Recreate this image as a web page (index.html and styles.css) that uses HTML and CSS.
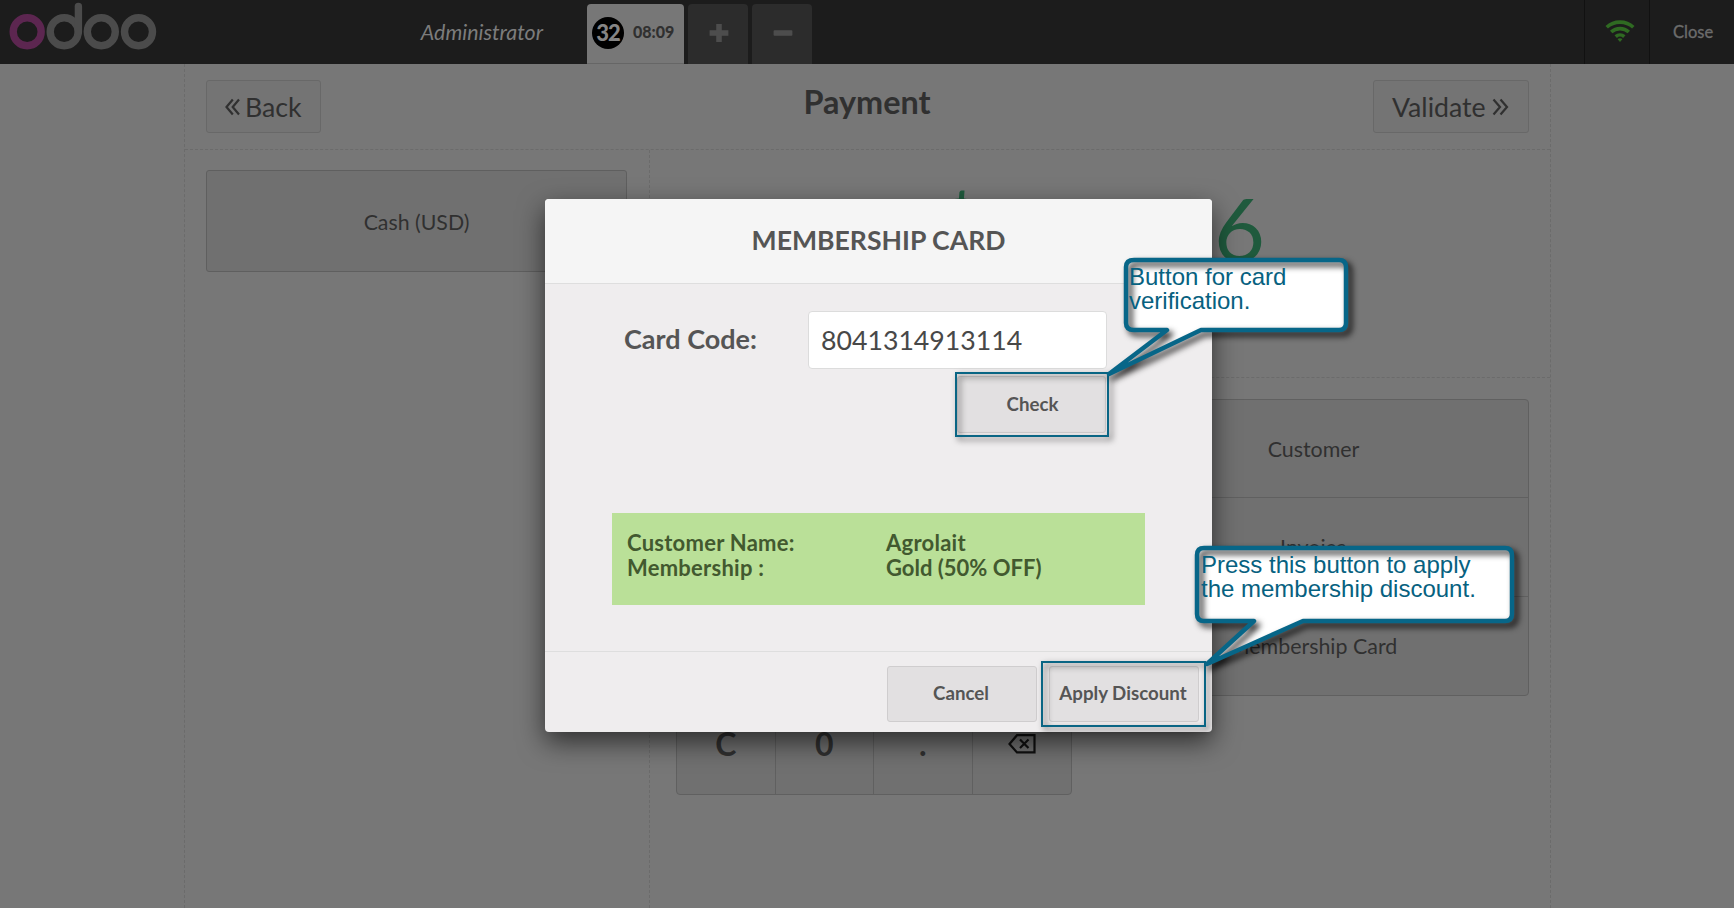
FILE: index.html
```html
<!DOCTYPE html>
<html lang="en">
<head>
<meta charset="utf-8">
<title>Payment</title>
<link rel="stylesheet" href="styles.css">
</head>
<body>
<header class="topbar">
  <svg class="logo" width="160" height="60" viewBox="0 0 160 60" fill="none" stroke="#4b4b4b" stroke-width="7.4">
    <circle cx="27.2" cy="31.7" r="14" stroke="#5c2650"/>
    <circle cx="64.2" cy="31.7" r="14"/>
    <circle cx="101.3" cy="31.7" r="14"/>
    <circle cx="138.5" cy="31.7" r="14"/>
    <path d="M78.4 6.5V32" stroke-linecap="round"/>
  </svg>
  <div class="user">Administrator</div>
  <nav class="tabs">
    <div class="tab active"><span class="num">32</span><span class="time">08:09</span></div>
    <div class="tab"><svg width="20" height="20" viewBox="0 0 20 20"><path d="M7.2 1h5.600v6.200h6.600v5.600h-6.600V19H7.200v-6.200H.600V7.200h6.600z" fill="#4d4d4d"/></svg></div>
    <div class="tab"><svg width="20" height="20" viewBox="0 0 20 20"><rect x=".6" y="7.200" width="18.800" height="5.600" rx=".8" fill="#4d4d4d"/></svg></div>
  </nav>
  <div class="wifi">
    <svg width="32" height="24" viewBox="0 0 32 24">
      <path class="waves" d="M2.700 8.200C10 1.400 22 1.400 29.300 8.200M7.200 13c5-4.500 12.600-4.500 17.600 0M11.700 17.600c2.500-2.200 6.100-2.200 8.600 0"/>
      <path d="M13.500 20q2.500-1.700 5 0L16 23z" fill="#2f6a22"/>
    </svg>
  </div>
  <div class="close">Close</div>
</header>
<main class="screen">
  <div class="head">
    <div class="btn back"><svg width="15" height="18" viewBox="0 0 15 18"><path d="M7.8 1.5L1.5 9l6.3 7.5M14 1.5L7.7 9l6.3 7.5"/></svg>Back</div>
    <h1>Payment</h1>
    <div class="btn next">Validate<svg width="17" height="18" viewBox="0 0 17 18"><path d="M1.5 1.5L8 9l-6.500 7.500M8.500 1.500L15 9l-6.500 7.500"/></svg></div>
  </div>
  <div class="cols">
    <section class="methods"><div class="method">Cash (USD)</div></section>
    <section class="pay">
      <div class="amount"><span>$</span><span>6</span></div>
      <div class="controls">
        <div class="pad">
          <div class="row"></div><div class="row"></div><div class="row"></div>
          <div class="row keys">
            <b>C</b><b>0</b><b>.</b>
            <b><svg width="28" height="20" viewBox="0 0 28 20" fill="none" stroke="#101010" stroke-width="2.2"><path d="M1.500 10L9 1.200h17.500v17.200H9zM12 5.500l8.500 8.500M20.500 5.500L12 14"/></svg></b>
          </div>
        </div>
        <div class="side"><div>Customer</div><div>Invoice</div><div>Membership Card</div></div>
      </div>
    </section>
  </div>
</main>
<div class="modal">
  <div class="title">MEMBERSHIP CARD</div>
  <div class="body">
    <div class="field"><span class="label">Card Code:</span><span class="input">8041314913114</span></div>
    <div class="check"><span>Check</span></div>
    <div class="info"><span class="wide">Customer Name:</span><span class="wide">Agrolait</span><span class="wide">Membership :</span><span>Gold (50% OFF)</span></div>
  </div>
  <div class="foot"><div class="action">Cancel</div><div class="action">Apply Discount</div></div>
</div>
<div class="mark mark-check"></div>
<div class="mark mark-apply"></div>
<div class="callout callout-check">
  <svg width="270" height="150" viewBox="1100 250 270 150">
    <path class="bg" d="M1134 260H1339Q1346 260 1346 267V323Q1346 330 1339 330H1201L1109 374L1167 330H1134Q1126 330 1126 323V267Q1126 260 1134 260Z"/>
    <path class="line" d="M1134 260H1339Q1346 260 1346 267V323Q1346 330 1339 330H1201L1109 374L1167 330H1134Q1126 330 1126 323V267Q1126 260 1134 260Z"/>
  </svg>
  <p>Button for card<br>verification.</p>
</div>
<div class="callout callout-apply">
  <svg width="350" height="150" viewBox="1190 538 350 150">
    <path class="bg" d="M1204 548H1505Q1512 548 1512 555V614Q1512 621 1505 621H1303L1207 664L1254 621H1204Q1197 621 1197 614V555Q1197 548 1204 548Z"/>
    <path class="line" d="M1204 548H1505Q1512 548 1512 555V614Q1512 621 1505 621H1303L1207 664L1254 621H1204Q1197 621 1197 614V555Q1197 548 1204 548Z"/>
  </svg>
  <p>Press this button to apply<br>the membership discount.</p>
</div>
</body>
</html>
```
FILE: styles.css
```css
* { box-sizing: border-box; }
body {
  margin: 0;
  position: relative;
  width: 1734px;
  height: 908px;
  overflow: hidden;
  background: #777;
  color: #303030;
  font-family: Lato, sans-serif;
}
svg { display: block; flex: none; }
.topbar {
  display: flex;
  height: 64px;
  background: #1c1c1c;
  color: #7c7c7c;
}
.logo { width: 160px; }
.user {
  width: 383px;
  line-height: 65px;
  text-align: right;
  font-size: 21.400px;
  font-style: italic;
}
.tabs { display: flex; gap: 4px; padding: 4px 0 0 44px; flex: 1; }
.tab {
  width: 60px;
  display: flex;
  align-items: center;
  justify-content: center;
  background: #2c2c2c;
  border-radius: 4px 4px 0 0;
}
.tab svg { margin: -2px 0 0 2px; }
.tab.active {
  width: 97px;
  justify-content: flex-start;
  padding: 0 0 1px 5px;
  gap: 9px;
  background: #777;
  color: #303030;
  border-bottom: 1px solid #666;
}
.num {
  width: 32px;
  height: 32px;
  border-radius: 50%;
  background: #000;
  color: #858585;
  font-size: 22px;
  line-height: 32px;
  font-weight: 900;
  letter-spacing: -1px;
  text-align: center;
}
.time { font-size: 16px; font-weight: 900; padding-bottom: 3px; }
.wifi {
  width: 66px;
  border-left: 1px solid #111;
  border-right: 1px solid #111;
  padding: 19px 0 0 19px;
}
.waves { fill: none; stroke: #2f6a22; stroke-width: 3.600; }
.close { width: 84px; padding-left: 23px; line-height: 64px; font-size: 16.500px; color: #6c6c6c; -webkit-text-stroke: .300px; }
.screen {
  width: 1367px;
  height: 844px;
  margin-left: 184px;
  border: dashed #6b6b6b;
  border-width: 0 1px;
}
.head {
  display: flex;
  justify-content: space-between;
  height: 86px;
  padding: 16px 21px 0;
  border-bottom: 1px dashed #6b6b6b;
}
.btn {
  display: flex;
  align-items: center;
  height: 53px;
  border: 1px solid #686868;
  border-radius: 3px;
  background: #747474;
  font-size: 26.700px;
}
.btn path { fill: none; stroke: #303030; stroke-width: 2.200; }
.btn svg { margin-top: 1px; }
.back { width: 115px; padding-left: 18px; gap: 5px; }
.next { width: 156px; padding-left: 18px; gap: 6px; }
h1 { margin: 0 0 0 40px; font-size: 32.400px; line-height: 44px; }
.cols { display: flex; height: 758px; }
.methods { width: 465px; padding: 20px 22px 20px 21px; border-right: 1px dashed #6b6b6b; }
.method {
  height: 102px;
  border: 1px solid #5f5f5f;
  border-radius: 3px;
  background: #707070;
  font-size: 21.300px;
  line-height: 102px;
  text-align: center;
}
.pay { flex: 1; }
.amount {
  height: 228px;
  padding: 27px 0 0 283px;
  border-bottom: 1px dashed #6b6b6b;
  display: flex;
  gap: 230px;
  color: #1f5a3d;
  font-size: 88px;
  line-height: 103px;
}
.controls { display: flex; justify-content: space-between; padding: 21px 21px 0 26px; }
.pad, .side { border: 1px solid #606060; border-radius: 4px; background: #707070; }
.pad { width: 396px; height: 396px; display: grid; grid-template-rows: repeat(4, 1fr); }
.keys { display: grid; grid-template-columns: repeat(4, 1fr); }
.keys b {
  display: flex;
  align-items: center;
  justify-content: center;
  padding-bottom: 2px;
  font-size: 32px;
  border-right: 1px solid #606060;
}
.keys b:last-child { border-right: 0; }
.side { width: 431px; height: 297px; display: grid; grid-template-rows: repeat(3, 1fr); }
.side div {
  display: flex;
  align-items: center;
  justify-content: center;
  border-bottom: 1px solid #606060;
  font-size: 21.400px;
}
.side div:last-child { border-bottom: 0; }
.modal {
  position: absolute;
  left: 545px;
  top: 199px;
  width: 667px;
  height: 533px;
  display: flex;
  flex-direction: column;
  border-radius: 4px;
  background: #efedee;
  color: #555;
  box-shadow: 0 10px 27px rgba(0, 0, 0, .6);
}
.title {
  height: 85px;
  border-bottom: 1px solid #dedede;
  border-radius: 4px 4px 0 0;
  background: #f5f5f5;
  font-size: 26.600px;
  font-weight: 700;
  line-height: 83px;
  text-align: center;
}
.body { height: 368px; padding-top: 27px; border-bottom: 1px solid #dedede; }
.field { display: flex; padding-left: 79px; height: 58px; line-height: 56px; font-size: 26.700px; }
.label { width: 184px; font-weight: 700; font-size: 27px; }
.input {
  width: 299px;
  padding-left: 12px;
  border: 1px solid #dcdcdc;
  border-radius: 4px;
  background: #fff;
  color: #484848;
}
.check, .action {
  height: 56px;
  border: 1px solid #cfcdce;
  border-radius: 3px;
  background: #e2e0e1;
  font-size: 18.700px;
  font-weight: 700;
  line-height: 54px;
  text-align: center;
}
.check { width: 149px; margin: 7px 0 0 412px; padding-left: 2px; height: 57px; }
.info {
  width: 533px;
  height: 92px;
  margin: 80px 0 0 67px;
  padding: 17px 15px;
  display: grid;
  grid-template-columns: 259px 1fr;
  grid-auto-rows: 25px;
  background: #bae098;
  color: #42592f;
  font-size: 22px;
  line-height: 25px;
  font-weight: 700;
}
.wide { letter-spacing: .250px; }
.foot { display: flex; gap: 12px; padding: 14px 0 0 342px; }
.action { width: 150px; line-height: 53px; padding-right: 2px; }
.mark {
  position: absolute;
  border: 2px solid #096584;
  filter: drop-shadow(3px 3px 3px rgba(0, 0, 0, .65));
}
.mark-check { left: 955px; top: 372px; width: 154px; height: 65px; }
.mark-apply { left: 1041px; top: 661px; width: 165px; height: 66px; }
.callout {
  position: absolute;
  color: #076180;
  font: 24px/24px "Liberation Sans", Arial, sans-serif;
}
.callout p { position: absolute; margin: 0; white-space: nowrap; }
.callout-check { left: 1100px; top: 250px; }
.callout-check p { left: 29px; top: 15px; }
.callout-apply { left: 1190px; top: 538px; }
.callout-apply p { left: 11px; top: 15px; }
.callout svg { overflow: visible; }
.bg { fill: #fff; }
.line {
  fill: none;
  stroke: #076688;
  stroke-width: 4.500;
  stroke-linejoin: round;
  filter: drop-shadow(4px 4px 3px rgba(0, 0, 0, .85));
}
```
